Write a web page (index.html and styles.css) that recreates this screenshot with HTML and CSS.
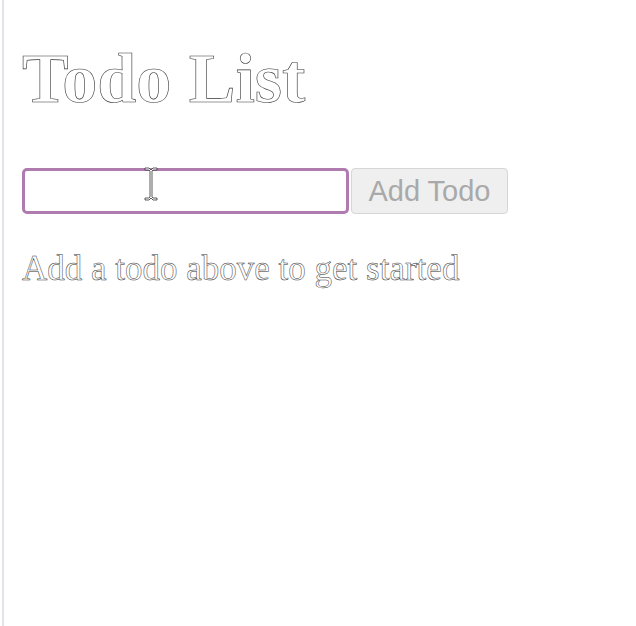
FILE: index.html
```html
<!DOCTYPE html>
<html>
<head>
<meta charset="utf-8">
<link rel="stylesheet" href="styles.css">
</head>
<body>
<div class="page">
  <h1 class="title">Todo List</h1>
  <div class="form">
    <div class="field">
      <input class="input" type="text">
      <svg class="cursor" width="16" height="34" viewBox="0 0 16 34">
        <path d="M2 1 H6 L8 3 L10 1 H14 V3 H10 L9 4 V30 L10 31 H14 V33 H10 L8 31 L6 33 H2 V31 H6 L7 30 V4 L6 3 H2 Z" fill="#fff" stroke="#333" stroke-width="0.8"/>
      </svg>
    </div>
    <button class="add" disabled>Add Todo</button>
  </div>
  <p class="empty">Add a todo above to get started</p>
</div>
</body>
</html>
```
FILE: styles.css
```css
html, body {
  margin: 0;
  padding: 0;
  background: #fff;
}
.page {
  margin-left: 2px;
  border-left: 2px solid #e6e0ec;
  padding: 39px 0 0 18px;
  min-height: 587px;
  font-family: "Liberation Serif", "Times New Roman", serif;
}
.title {
  margin: 0 0 49px 0;
  font-size: 70px;
  font-weight: bold;
  line-height: 80px;
  color: #fff;
  -webkit-text-stroke: 0.6px #333;
}
.form {
  display: flex;
  gap: 2px;
  align-items: stretch;
}
.field {
  position: relative;
}
.input {
  box-sizing: border-box;
  width: 327px;
  height: 46px;
  border: 3px solid #b07bae;
  border-radius: 5px;
  outline: none;
  background: #fff;
  margin: 0;
}
.cursor {
  position: absolute;
  left: 121px;
  top: -1px;
}
.add {
  box-sizing: border-box;
  width: 157px;
  height: 46px;
  margin: 0;
  padding: 0;
  background: #efefef;
  border: 1px solid #d6d6d6;
  border-radius: 4px;
  color: #a9a9a9;
  font-family: "Liberation Sans", Arial, sans-serif;
  font-size: 29px;
}
.empty {
  margin: 35px 0 0 0;
  font-size: 35px;
  line-height: 40px;
  color: #fff;
  -webkit-text-stroke: 0.5px #333;
}
```
